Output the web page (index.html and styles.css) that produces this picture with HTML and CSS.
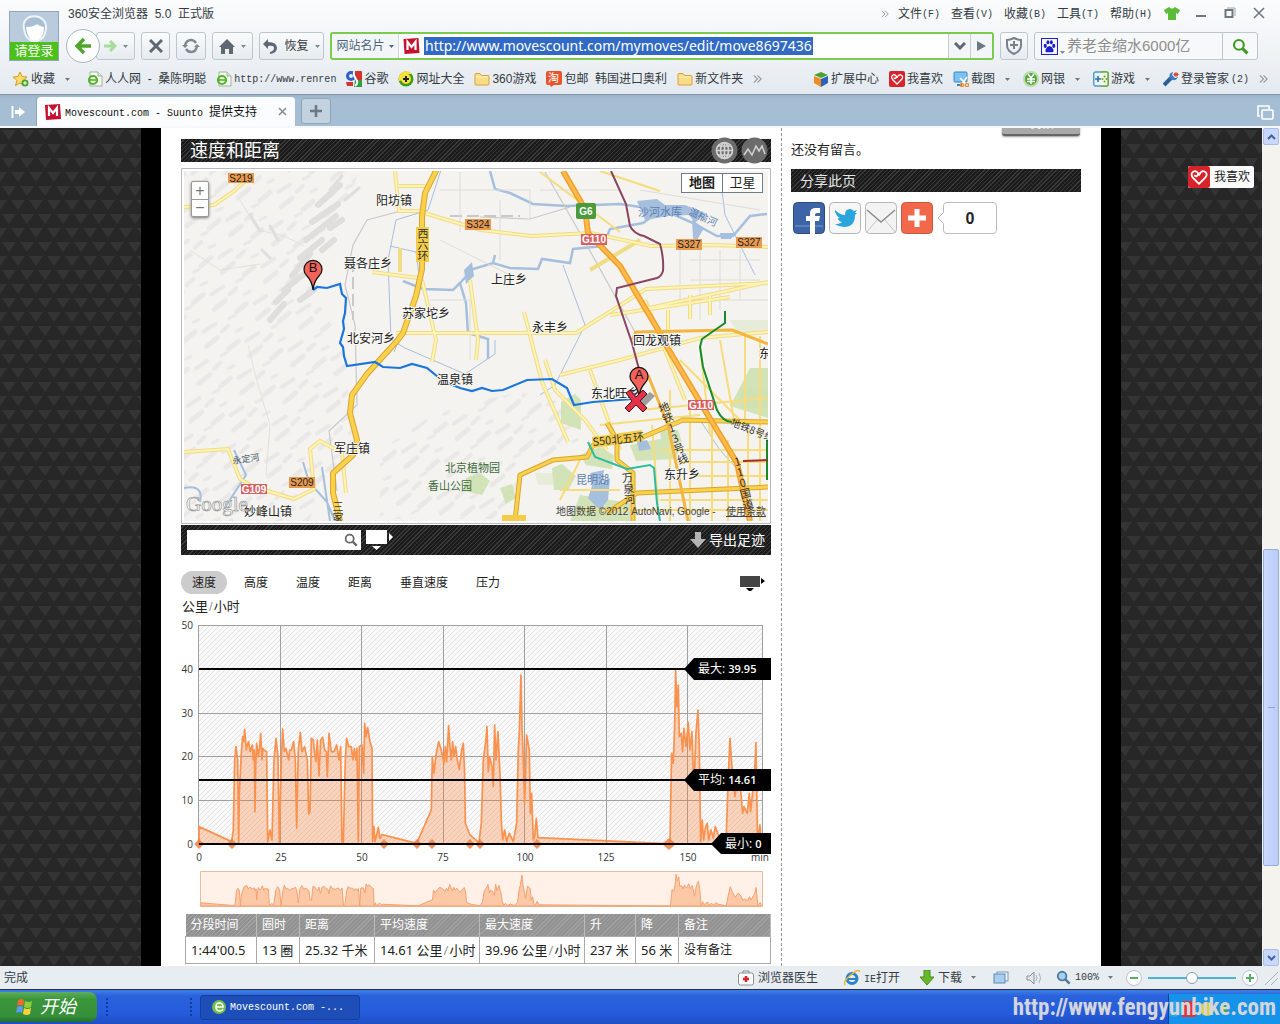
FILE: index.html
```html
<!DOCTYPE html>
<html lang="zh-CN">
<head>
<meta charset="utf-8">
<title>Movescount.com - Suunto 提供支持</title>
<link rel="stylesheet" href="styles.css">
</head>
<body>
<svg class="defs" width="0" height="0" aria-hidden="true">
  <symbol id="m" viewBox="0 0 16 16"><path d="M0 1 15 0l1 15L1 16z" fill="#c41230"/><path d="M4 12V4l4 5 4-5v8" fill="none" stroke="#fff" stroke-width="2.2"/></symbol>
  <symbol id="epage" viewBox="0 0 16 16"><path d="M3 1h8l4 4v10H3z" fill="#f6faf3" stroke="#9fb596"/><path d="M11 1v4h4" fill="#dfe9da" stroke="#9fb596"/><circle cx="6" cy="9" r="4" fill="none" stroke="#55b32a" stroke-width="2.2"/><path d="M3 9h7" stroke="#55b32a" stroke-width="1.6"/></symbol>
  <symbol id="folder" viewBox="0 0 16 16"><path d="M1 3.500q0-1 1-1h4l1.500 2H14q1 0 1 1V13q0 1-1 1H2q-1 0-1-1z" fill="#fbdc86" stroke="#d9a03c"/><path d="M2 6h12" stroke="#fff2c4"/></symbol>
  <symbol id="heart" viewBox="0 0 16 16"><rect width="16" height="16" rx="2" fill="#d8232a"/><path d="M8 13 3.500 8.500Q1.500 5.500 4 4q2-1 3.500 1.500Q6.500 8.500 5 7M8 13l4.500-4.500Q15 5.500 12 4 10 3 8 6.500" fill="none" stroke="#fff" stroke-width="1.300" stroke-linecap="round"/></symbol>
  <symbol id="lens" viewBox="0 0 16 16"><circle cx="6.500" cy="6.500" r="4.600" fill="none" stroke="currentColor" stroke-width="2"/><path d="m10 10 4.500 4.500" stroke="currentColor" stroke-width="2.800"/></symbol>
  <symbol id="caret" viewBox="0 0 7 4"><path d="M0 0h7L3.500 4z" fill="currentColor"/></symbol>
  <symbol id="more" viewBox="0 0 10 8"><path d="m1 0 4 4-4 4M5 0l4 4-4 4" fill="none" stroke="#8f979f" stroke-width="1.200"/></symbol>
</svg>

<header class="chrome">
  <button class="login"><svg viewBox="0 0 48 30" width="48" height="30"><rect width="48" height="30" fill="#b9cbdd"/><path d="M14 17C10 0 38 0 36 17q-1 10-9 12h-5q-7-3-8-12z" fill="#a9bfd3" stroke="#eef4f9" stroke-width="2"/><path d="M16 15q8 0 11-3 3 3 7 3 0 10-6 13h-6q-5-3-6-13z" fill="#fff"/></svg><span>请登录</span></button>
  <div class="rows">
    <div class="titlerow">
      <span class="apptitle">360安全浏览器&nbsp; 5.0&nbsp; 正式版</span>
      <svg class="more" width="8" height="8"><use href="#more"/></svg>
      <nav class="menus"><button>文件<i>(F)</i></button><button>查看<i>(V)</i></button><button>收藏<i>(B)</i></button><button>工具<i>(T)</i></button><button>帮助<i>(H)</i></button></nav>
      <button class="win" aria-label="皮肤"><svg width="16" height="13" viewBox="0 0 16 13"><path d="M5 0q3 3 6 0l5 3-2 4-2-1v7H4V6L2 7 0 3z" fill="#5cbc38"/></svg></button>
      <button class="win" aria-label="最小化"><svg width="12" height="12"><path d="M1 9h10" stroke="#6d7882" stroke-width="2"/></svg></button>
      <button class="win" aria-label="还原"><svg width="12" height="12"><path d="M3 1h8v8" fill="none" stroke="#9aa5ae"/><rect x="1.500" y="3" width="7" height="7" fill="none" stroke="#6d7882" stroke-width="2"/></svg></button>
      <button class="win" aria-label="关闭"><svg width="12" height="12"><path d="m1 1 10 10M11 1 1 11" stroke="#6d7882" stroke-width="1.600"/></svg></button>
    </div>
    <div class="toolrow">
      <div class="nav">
        <button class="back" aria-label="后退"><svg width="18" height="18"><path d="M10 2 3 9l7 7M4 9h13" fill="none" stroke="#4fa52a" stroke-width="3.400"/></svg></button>
        <button class="fwd" aria-label="前进"><svg width="14" height="12"><path d="m7 1 5 5-5 5M11 6H1" fill="none" stroke="#a9dc9c" stroke-width="3"/></svg><svg class="car" width="5" height="3"><use href="#caret"/></svg></button>
      </div>
      <button class="tb w29" aria-label="停止"><svg width="14" height="14"><path d="m1 1 12 12M13 1 1 13" stroke="#5d6873" stroke-width="3"/></svg></button>
      <button class="tb w30" aria-label="刷新"><svg width="18" height="16" fill="none" stroke="#7e8891" stroke-width="2.400"><path d="M3 8q1-6 6-6 3 0 5 3M15 8q-1 6-6 6-3 0-5-3"/><path d="m0 7 3 3 3-3zM12 9l3-3 3 3z" fill="#7e8891" stroke="none"/></svg></button>
      <button class="tb w41" aria-label="主页"><svg width="16" height="15"><path d="M8 0 0 8h2v7h4v-5h4v5h4V8h2z" fill="#5d6873"/></svg><svg class="car" width="5" height="3"><use href="#caret"/></svg></button>
      <button class="tb w65"><svg width="15" height="15"><path d="M5 0 0 5l5 5V7q6-1 6 2 0 3-4 4v2q7-1 7-6 0-6-9-6z" fill="#5d6873"/></svg>恢复<svg class="car" width="5" height="3"><use href="#caret"/></svg></button>
      <form class="address">
        <button type="button" class="card">网站名片<svg width="5" height="3"><use href="#caret"/></svg></button>
        <svg width="17" height="16"><use href="#m"/></svg>
        <input class="url" aria-label="地址" value="http://www.movescount.com/mymoves/edit/move8697436">
        <span class="grow"></span>
        <button type="button" class="seg" aria-label="展开"><svg width="12" height="8"><path d="m1 1 5 5 5-5" fill="none" stroke="#5d6873" stroke-width="3"/></svg></button>
        <button type="button" class="seg" aria-label="转到"><svg width="9" height="10"><path d="m0 0 9 5-9 5z" fill="#6d7882"/></svg></button>
      </form>
      <button class="tb w28" aria-label="安全"><svg width="18" height="18"><path d="M9 1q4 2 7 2v5q0 6-7 9-7-3-7-9V3q3 0 7-2z" fill="none" stroke="#76818b" stroke-width="2"/><path d="M9 4v8M5 8h8" stroke="#76818b" stroke-width="2"/></svg></button>
      <form class="search">
        <svg width="17" height="17" viewBox="0 0 16 16"><rect x=".5" y=".5" width="15" height="15" fill="#fff" stroke="#1b22c9"/><g fill="#1b22c9"><ellipse cx="4" cy="7.500" rx="1.500" ry="2"/><ellipse cx="6.500" cy="4" rx="1.400" ry="2"/><ellipse cx="9.700" cy="4" rx="1.400" ry="2"/><ellipse cx="12" cy="7.500" rx="1.500" ry="2"/><path d="M8 7.500q2 0 3.500 3 1 3-1.500 3H6q-2.500 0-1.500-3Q6 7.500 8 7.500z"/></g></svg>
        <svg class="car low" width="5" height="3"><use href="#caret"/></svg>
        <input aria-label="搜索" placeholder="养老金缩水6000亿">
        <button type="button" aria-label="搜索"><svg width="17" height="17"><use href="#lens"/></svg></button>
      </form>
    </div>
  </div>
</header>

<nav class="bookmarks">
  <a href="#" class="fav"><svg width="16" height="16"><path d="m7 1 2 4.500 5 .5-4 3.500 1.500 5L7 12l-4.500 2.500L4 9.500 0 6l5-.5z" fill="#fddc6a" stroke="#d79a22"/><circle cx="12" cy="12" r="3.500" fill="#4aa52a"/><path d="M12 10v4M10 12h4" stroke="#fff"/></svg>收藏<svg class="drop" width="5" height="3"><use href="#caret"/></svg></a>
  <a href="#"><svg width="16" height="16"><use href="#epage"/></svg>人人网&nbsp; -&nbsp; 桑陈明聪</a>
  <a href="#"><svg width="16" height="16"><use href="#epage"/></svg><i>http://www.renren</i></a>
  <a href="#"><svg width="16" height="16"><path d="M9 0h6q1 0 1 1v8H9z" fill="#d8302a"/><path d="M9 9h7v7H8z" fill="#2f9e44"/><circle cx="5" cy="5" r="3.500" fill="none" stroke="#2a62c9" stroke-width="3"/><path d="M0 11h7v4H1z" fill="#d8302a"/><path d="M8 1q-1 3 2 7 3 4-1 7" fill="none" stroke="#fff" stroke-width="2"/></svg>谷歌</a>
  <a href="#"><svg width="16" height="16"><circle cx="8" cy="8" r="7.500" fill="#3d9a1c"/><path d="M1 10A7.500 7.500 0 0 1 14 3q-7-1-9 6z" fill="#f6e13a"/><circle cx="8" cy="8" r="5" fill="#f6e13a"/><path d="M8 5v6M5 8h6" stroke="#222" stroke-width="2"/></svg>网址大全</a>
  <a href="#"><svg width="16" height="16"><use href="#folder"/></svg>360游戏</a>
  <a href="#"><svg width="16" height="16"><rect width="16" height="14" rx="2" fill="#e8552b"/><path d="m4 14 1 2 3-2" fill="#e8552b"/><text x="2" y="11" font-size="11" fill="#fff">淘</text></svg>包邮&nbsp; 韩国进口奥利</a>
  <a href="#"><svg width="16" height="16"><use href="#folder"/></svg>新文件夹</a>
  <svg width="9" height="8"><use href="#more"/></svg>
  <span class="grow"></span>
  <a href="#"><svg width="16" height="16"><path d="m8 1 7 3-7 3-7-3z" fill="#4da32f"/><path d="m1 5 7 3v8l-7-4z" fill="#f08a24"/><path d="m15 5-7 3v8l7-4z" fill="#2a62b9"/></svg>扩展中心</a>
  <a href="#"><svg width="16" height="16"><use href="#heart"/></svg>我喜欢</a>
  <a href="#"><svg width="16" height="16"><rect x="1" y="1" width="13" height="10" rx="1" fill="#7cc2ef" stroke="#3f84bd"/><path d="M4 14h5" stroke="#3f84bd" stroke-width="2"/><path d="m7 7 6 6M14 6l-5 7" stroke="#fff" stroke-width="1.500"/><circle cx="9" cy="14" r="1.600" fill="none" stroke="#f08a24" stroke-width="1.300"/><circle cx="14" cy="14" r="1.600" fill="none" stroke="#f08a24" stroke-width="1.300"/></svg>截图<svg class="drop" width="5" height="3"><use href="#caret"/></svg></a>
  <a href="#"><svg width="16" height="16"><circle cx="8" cy="8" r="7" fill="#54a63a" stroke="#b9dca9" stroke-width="2"/><path d="m5 3 3 4 3-4M8 7v6M4 8h8M4 10.500h8" fill="none" stroke="#fff" stroke-width="1.500"/></svg>网银<svg class="drop" width="5" height="3"><use href="#caret"/></svg></a>
  <a href="#"><svg width="16" height="16"><rect x=".7" y="1" width="14.500" height="14" rx="2" fill="#e9f2f7" stroke="#4c9acb" stroke-width="1.400"/><path d="M8 1h6q1 0 1 2v10q0 2-1 2H8" fill="#f2f7ea" stroke="#6fae2e" stroke-width="1.400"/><path d="M5 5v6M2 8h6" stroke="#2e71a8" stroke-width="1.600"/><g fill="#6a9c2e"><circle cx="11.500" cy="5.500" r="1"/><circle cx="11.500" cy="10.500" r="1"/><circle cx="13.500" cy="8" r="1"/><circle cx="9.500" cy="8" r="1"/></g></svg>游戏<svg class="drop" width="5" height="3"><use href="#caret"/></svg></a>
  <a href="#"><svg width="16" height="16"><path d="m1 14 7-7" stroke="#2d5f9e" stroke-width="4"/><path d="M7 8Q5 2 10 1L9 4l3 3 3-1q-2 5-8 2z" fill="#3f7dc2"/><path d="M13 1v5M10.500 3.500h5M11 2l4 3M15 2l-4 3" stroke="#d63a2f"/></svg>登录管家<i>(2)</i></a>
  <svg width="9" height="8"><use href="#more"/></svg>
</nav>

<div class="tabs">
  <button class="side" aria-label="侧栏"><svg width="15" height="14"><path d="M1.500 1v12" stroke="#fff" stroke-width="2"/><path d="M4 5h4V2l6 5-6 5V9H4z" fill="#fff"/></svg></button>
  <div class="tab"><svg width="16" height="16"><use href="#m"/></svg><span><i>Movescount.com&nbsp;-&nbsp;Suunto&nbsp;</i>提供支持</span><button aria-label="关闭标签"><svg width="9" height="9"><path d="m1 1 7 7M8 1 1 8" stroke="#84909b" stroke-width="1.600"/></svg></button></div>
  <button class="newtab" aria-label="新标签"><svg width="14" height="14"><path d="M7 1v12M1 7h12" stroke="#6d7882" stroke-width="2.600"/></svg></button>
  <span class="grow"></span>
  <svg class="stack" width="17" height="16" fill="none" stroke="#fff" stroke-width="1.600"><path d="M3 11H1V1h11v3"/><rect x="5" y="5" width="11" height="9" rx="1"/></svg>
</div>

<div class="viewport">
  <div class="scroller">
    <main class="page">
      <section class="left">
        <h1 class="bar big"><span>速度和距离</span>
          <svg width="27" height="27" viewBox="0 0 27 27"><circle cx="13.500" cy="13.500" r="13" fill="#6b6b6b"/><g fill="none" stroke="#d3d3d3" stroke-width="1.700"><circle cx="13.500" cy="13.500" r="8"/><ellipse cx="13.500" cy="13.500" rx="4" ry="8"/><path d="M13.500 5v17M5 13.500h17M7 9h13M7 18h13"/></g></svg>
          <svg width="27" height="27" viewBox="0 0 27 27"><circle cx="13.500" cy="13.500" r="13" fill="#6b6b6b"/><path d="m3 18 4-6 4 6 4-9 3 5 3-5 3 8" fill="none" stroke="#d3d3d3" stroke-width="1.500"/></svg>
        </h1>
        <div class="map">
          <svg viewBox="181 168 590 356" class="fluid" font-size="12">
            <defs>
              <clipPath id="mc"><path d="M184 171h584v350H184z"/></clipPath>
              <pattern id="hill" width="44" height="38" patternUnits="userSpaceOnUse" patternTransform="rotate(12)"><g fill="none" stroke="#e9e8e6" stroke-linecap="round"><path d="M4 16 14 6M22 12l5-7" stroke-width="4"/><path d="m10 30 9-11M32 28l8-10" stroke-width="5"/><path d="m26 36 5-4M36 9l5-4" stroke-width="3"/></g></pattern>
            </defs>
            <path d="M181.500 168.500h589v355h-589z" fill="#fff" stroke="#b5b8c0"/>
            <g clip-path="url(#mc)">
              <path d="M184 171h584v350H184z" fill="#f4f3f0"/>
              <path d="M184 171h175l-15 45-40 30 10 50 30 50 5 60 5 40-25 30-20 45H184zM380 450l60-40 80-18 40 10 20 40-60 25-10 52H380z" fill="url(#hill)"/>
              <g fill="none" stroke="#dfdedc" stroke-linecap="round"><path d="m318 205 22-20M312 222l26-18M306 240l30-24M300 258l22-18M292 276l18-22M284 290l20-16M276 302l12-12M300 300l14-10M270 320l14-16M322 250l12-10M330 228l12-8" stroke-width="6"/><path d="m270 226 8 14M250 215l10 16M262 250l8 8M330 190l12-14M345 200l14-12" stroke-width="3"/></g>
              <g fill="#cadfaa"><path d="m561 402 14-8 6 6v30l-20-7zM750 368h18v50l-38-12zM580 455l20-8 14 8-2 14-26-4zM630 445l30-6 20 8-4 12-40 2zM552 468l10-4 14 12-8 14h-14zM466 478l14-5 10 8-8 14-18-4zM580 495l50 8v18h-60zM500 488l12-4 4 14-10 6zM660 430h18l4 12-20 4z" opacity=".8"/><path d="M535 473h18v12h-15zM730 320h38v14h-30zM740 388h28v20h-28z" opacity=".35"/></g>
              <g fill="#a5bfdd"><path d="m590 473 14-3-2 14 8-6-2 22-8 10-12-12 4-12zM637 201l20-2 8 6h20l20 8-10 10-6-8-20 1-24 4zM692 220l12 8-8 14-3-4zM720 233h14l-3 6h-10zM637 442l10-2 4 9-12 2zM464 270l8-8 2 14-8 8z"/></g>
              <g fill="none" stroke="#a5bfdd" stroke-width="2.500"><path d="m490 171 5 18 15 4 23 11 34 2 53-2 20 3M668 212l25 11 24 13h16l17-20 17-2M650 218l-7 5-33 6-7 17-30 3-3 14-28-4-4 10-28-1-17-5-20 6-13 14-7 7-30-1-20-8M493 263l2-8M460 283l6 20 2 30 20 6v20"/><path d="M184 488q20-4 16 14M234 450l12 25-22 34M303 462l6 20 18 20 8 19M322 467l8 54" stroke-width="2"/><path d="M441 170 428 210 396 220l-8 40 3 80 14 8 60 26 30-20v-14M563 265l22 60-30 60-15 10M700 420l20 30 18 20M390 246l26 6 4 30-18 50-8 20M720 175l5 40 30 60" stroke-width="1"/></g>
              <g fill="none" stroke="#c9c9c9"><path d="m397 212-30 8-14 25-8 40 10 40 2 80-28 26 8 60M480 217l50 2 40-12M545 172l40 70 50 90" stroke-width="1.200"/><path d="M240 200l18 30 26 6 20 10M248 345l10 40 12 40-4 50M190 250l30 20 40-6" stroke="#e2e1da" stroke-width="1"/><path d="M450 216h70M353 260v60" stroke-dasharray="12 5" stroke-width="2"/></g>
              <g fill="none" stroke="#dddcd8" stroke-width="1"><path d="M440 190h90v30M460 172v60M500 200v60M540 190h80M640 190l120 20M680 240v60M700 240v80M720 250v60M740 250v50M690 260h70M690 280h70M690 300h78M440 240l80 40M430 300h40v60"/></g>
              <g fill="none" stroke="#f0dc86" stroke-width="4"><path d="M184 207l30-2 20-14 18-16M395 171l4 40h22M399 186h26M421 212l60 18 50 6 60-3 60 13 60-1 57 2M372 272l46 6M396 333h180l70-44 122-6M470 280l8 60-2 20M524 312l18 70 26 60M640 240l-50 30M184 452l44-3 12 30 14 8 40 12 20-10-4-40 10-8 22 12 4 40M560 375l60-15 80-22 68-6M545 360l10 30 30 30 22 30M422 280l14 60-4 22M400 248v24M590 370l18 50 12 30M640 310l128-28M645 300l40 100M610 315l120-18M668 310v24M690 295v24M710 295v20"/></g>
              <g fill="none" stroke="#fdf3b4" stroke-width="2"><path d="M184 207l30-2 20-14 18-16M395 171l4 40h22M399 186h26M421 212l60 18 50 6 60-3 60 13 60-1 57 2M372 272l46 6M396 333h180l70-44 122-6M470 280l8 60-2 20M524 312l18 70 26 60M184 452l44-3 12 30 14 8 40 12 20-10-4-40 10-8 22 12 4 40M560 375l60-15 80-22 68-6M545 360l10 30 30 30 22 30M422 280l14 60-4 22M590 370l18 50 12 30M640 310l128-28M645 300l40 100M610 315l120-18M668 310v24M690 295v24M710 295v20"/></g>
              <g fill="none" stroke="#f6dc7c" stroke-width="2"><path d="M640 410l128-12M600 425l100-10M660 450h108M680 462h88M690 476h78M660 500h108M580 510h188M670 390v131M690 400v121M712 425v96M728 440v81M748 430v91M652 425l6 80M560 500l20-40M680 360l60 60M700 345l10 90M720 340l14 80M745 336v90M760 336v185M540 172l80 60M600 171l60 20M560 490h60"/></g>
              <g fill="none" stroke-linejoin="round"><g stroke="#d9a531" stroke-width="6"><path d="m437 169-12 24-3 23v53l-6 27-13 37-6 8-30 33-15 21-2 18 7 27-4 15-20 18v20l7 28"/><path d="m515 521 5-46 33-15 34-3 6-12 50-8 40-17 85 2M607 423l10 17v20l16 13v48M607 513l30-20 131-6" stroke-width="5"/></g><g stroke="#fad14b" stroke-width="4"><path d="m437 169-12 24-3 23v53l-6 27-13 37-6 8-30 33-15 21-2 18 7 27-4 15-20 18v20l7 28"/><path d="m515 521 5-46 33-15 34-3 6-12 50-8 40-17 85 2M607 423l10 17v20l16 13v48M607 513l30-20 131-6" stroke-width="3"/></g>
              <path d="m563 171 22 38 3 24 32 33 40 67 7 14 36 60 34 56 13 58" stroke="#f0a12a" stroke-width="6"/><path d="m563 171 22 38 3 24 32 33 40 67 7 14 36 60 34 56 13 58" stroke="#ffb94a" stroke-width="3"/>
              <path d="m632 340 4-8 96-2 36 14M648 375l20 50 20 96" stroke="#f2b540" stroke-width="3"/></g>
              <path d="m611 171 15 33 4 22q4 8 14 10l16 8q4 14 3 27-2 6-6 7l-40 10-1 8 16 47 8 30" fill="none" stroke="#8a4460" stroke-width="2"/>
              <path d="M725 311v12l-23 16-2 8 3 20 14 43q6 12 15 12M767 440v40" fill="none" stroke="#178a2b" stroke-width="2"/>
              <path d="m588 442 7 15 32 12 23-4 4 3 3 35 3 18" fill="none" stroke="#2bbda0" stroke-width="2"/>
              <path d="M743 461l25-1" stroke="#9c2f2f" stroke-width="2"/>
              <path d="m313 290 4-3 10 1 13-4 2 10 4 4-1 15-2 8 1 8-4 14 3 4 1 9 3 10 28-4 8 5 17 1 12-4 15 4 16 13 17 7 12 3 10-3 10 3 11-1 24-10 25-1 15 9 7 17 19-3 40-3" fill="none" stroke="#1a76dc" stroke-width="2.200"/>
              <g fill="#e99a4e"><path d="M228 173h26v10h-26zM465 219h26v11h-26zM676 239h26v11h-26zM736 237h26v11h-26zM289 477h26v11h-26z"/></g><g fill="#d85f62"><path d="M581 234h26v11h-26zM688 400h26v10h-26zM241 484h26v10h-26z"/></g><rect x="576" y="203" width="20" height="16" rx="2" fill="#4b9b3c"/>
              <path d="M416 227h13v35h-13zM502 515h24v6h-24zM592 437l50-7 1 11-50 7z" fill="#f3cc48"/>
              <g font-size="10" text-anchor="middle" fill="#222" class="sans"><text x="241" y="182">S219</text><text x="478" y="228">S324</text><text x="689" y="248">S327</text><text x="749" y="246">S327</text><text x="302" y="486">S209</text></g>
              <g font-size="10" text-anchor="middle" fill="#fff" class="sans b"><text x="586" y="215">G6</text><text x="594" y="243">G110</text><text x="701" y="409">G110</text><text x="254" y="493">G109</text></g>
              <g fill="#222" class="halo"><text x="376" y="205">阳坊镇</text><text x="344" y="268">聂各庄乡</text><text x="402" y="318">苏家坨乡</text><text x="347" y="343">北安河乡</text><text x="491" y="284">上庄乡</text><text x="532" y="332">永丰乡</text><text x="633" y="345">回龙观镇</text><text x="437" y="384">温泉镇</text><text x="334" y="453">军庄镇</text><text x="244" y="516">妙峰山镇</text><text x="591" y="398">东北旺乡</text><text x="664" y="479">东升乡</text><text x="759" y="358">东</text></g>
              <g fill="#333" font-size="11"><text x="593" y="446" transform="rotate(-6 593 446)">S50北五环</text><text x="730" y="425" transform="rotate(22 730 425)" font-size="10">地铁8号线</text><g class="vert"><text x="423" y="228">西六环</text><text x="662" y="402" transform="rotate(-20 662 402)">地铁13号线</text><text x="627" y="472" transform="rotate(-6 627 472)">万泉河</text><text x="736" y="456" transform="rotate(-14 736 456)">110国道</text><text x="338" y="501">三家</text></g></g>
              <g fill="#3c6b3a" font-size="11"><text x="445" y="472">北京植物园</text><text x="428" y="490">香山公园</text></g>
              <g fill="#5b7fb0" font-size="11"><text x="576" y="484">昆明湖</text><text x="638" y="216">沙河水库</text><text x="688" y="214" transform="rotate(25 688 214)" font-size="10">温榆河</text></g><text x="233" y="464" transform="rotate(-8 233 464)" font-size="9" fill="#456">永定河</text>
              <text x="186" y="511" font-size="21" class="serif" fill="#fff" stroke="#999" stroke-width=".7">Google</text>
              <g font-size="10" fill="#444" class="sans"><text x="556" y="515">地图数据 ©2012 AutoNavi, Google -</text><text x="726" y="515" text-decoration="underline">使用条款</text></g>
            </g>
            <path d="m638 402 12-10 5 4-12 12z" fill="#000" opacity=".35"/>
            <g stroke="#111" stroke-width="1.200" fill="#f0625a"><path d="M313 290q-1-9-6-14a9 9 0 1 1 12 0q-5 5-6 14zM639 397q-1-9-6-14a9 9 0 1 1 12 0q-5 5-6 14z"/></g>
            <path d="m626 393 4-3 6 7 7-7 4 4-7 7 7 7-4 4-7-7-7 7-4-4 7-7z" fill="#e2324a" stroke="#4a1018"/>
            <g font-size="13" text-anchor="middle" class="sans" fill="#111"><text x="313" y="272">B</text><text x="639" y="379">A</text></g>
          </svg>
          <div class="zoom"><button>+</button><button>−</button></div>
          <div class="types"><button class="on">地图</button><button>卫星</button></div>
        </div>
        <div class="bar tools">
          <label class="find"><input aria-label="搜索地图"><svg width="14" height="14"><use href="#lens"/></svg></label>
          <svg width="29" height="22" fill="#fff"><path d="M1 1h21v14H1zM24 4l4 4-4 4zM7 17h9l-4.500 4z"/></svg>
          <span class="grow"></span>
          <a href="#"><svg width="16" height="16"><path d="M5 0h6v7h5l-8 9-8-9h5z" fill="#b5b5b5"/></svg>导出足迹</a>
        </div>
        <div class="pills"><button class="on">速度</button><button>高度</button><button>温度</button><button>距离</button><button>垂直速度</button><button>压力</button><span class="grow"></span><svg width="26" height="16"><path d="M0 1h20v11H0z" fill="#444"/><path d="m21 3 4 3-4 3zM6 13h8l-4 4z" fill="#000"/></svg></div>
        <p class="unit">公里<s>/</s>小时</p>
        <svg viewBox="181 618 590 250" class="fluid chart" font-size="10">
          <defs>
            <pattern id="hatch" width="5" height="5" patternUnits="userSpaceOnUse"><path d="M-1 6 6-1M-1 1l2-2M4 6l2-2" stroke="#e3e3e3"/></pattern>
            <path id="speed" vector-effect="non-scaling-stroke" d="M87 852V800L185 845 190 810 194 600 198 560 203 600 206 848 208 700 211 640 214 580 218 530 221 545 224 508 229 570 232 555 236 545 240 575 242 570 247 555 250 600 253 570 255 755 257 620 260 550 265 590 269 560 272 520 276 600 279 565 282 570 290 575 293 845 300 810 306 840 312 600 318 535 324 590 328 850 334 600 338 507 343 575 348 565 356 600 359 570 364 570 371 545 376 600 380 805 385 570 391 517 396 575 404 560 412 600 416 762 420 755 424 535 430 540 434 580 438 605 442 540 447 648 452 540 458 532 464 570 469 575 472 650 475 570 477 520 484 575 492 575 500 555 507 600 512 560 516 848 520 848 526 600 530 535 536 560 544 560 549 600 553 565 558 600 561 565 565 845 568 560 576 555 581 640 584 490 588 530 593 503 600 545 606 565 608 845 612 800 615 845 620 825 625 802 630 835 636 824 740 850 784 750 787 590 792 640 798 585 806 545 814 570 822 610 826 560 830 605 836 497 840 560 844 600 848 545 852 590 857 560 862 600 868 628 875 570 880 550 884 640 886 790 900 825 927 848 934 790 940 600 948 540 951 500 955 635 959 590 966 620 970 680 974 495 978 600 984 515 988 600 990 640 994 780 998 840 1004 810 1010 845 1018 820 1030 845 1040 790 1045 570 1048 520 1053 345 1056 500 1060 600 1064 730 1070 525 1078 570 1081 760 1085 700 1090 840 1094 830 1099 775 1104 833 1500 852 1505 580 1510 610 1514 500 1517 332 1521 440 1525 375 1528 530 1534 520 1538 575 1542 505 1548 560 1555 487 1560 570 1566 515 1572 690 1578 520 1584 450 1588 560 1592 845 1597 780 1601 840 1607 800 1612 790 1616 840 1623 810 1630 835 1636 800 1645 825 1668 850 1674 680 1680 535 1686 620 1695 710 1704 640 1712 690 1718 760 1722 740 1732 760 1738 700 1742 755 1750 680 1754 640 1758 548 1763 850 1770 795 1774 850V852z"/>
          </defs>
          <path d="M199 625h564v219H199z" fill="#f9f9f9"/>
          <path d="M199 625h564v219H199z" fill="url(#hatch)"/>
          <path d="M198.500 625V844M280.500 625V844M361.500 625V844M443.500 625V844M524.500 625V844M606.500 625V844M687.500 625V844M762.500 625V844M199 625.500h564M199 713.500h564M199 756.500h564M199 800.500h564" stroke="#a0a0a0"/>
          <use href="#speed" transform="matrix(.3333 0 0 .3333 170 560)" fill="#f97b2c" fill-opacity=".3" stroke="#f9924e" stroke-width="1.700" stroke-linejoin="round"/>
          <path d="m199 839 5 5-5 5-5-5zM232 839l5 5-5 5-5-5zM384 839l5 5-5 5-5-5zM417 839l5 5-5 5-5-5zM432 839l5 5-5 5-5-5zM470 839l5 5-5 5-5-5zM480 839l5 5-5 5-5-5zM537 839l5 5-5 5-5-5zM669 838l7 6-7 6-7-6z" fill="#f07a35" opacity=".8"/>
          <path d="M199 669h490M199 780h490M199 844h520" stroke="#000" stroke-width="2"/>
          <g fill="#333" class="num"><g text-anchor="end"><text x="193" y="629">50</text><text x="193" y="673">40</text><text x="193" y="717">30</text><text x="193" y="760">20</text><text x="193" y="804">10</text><text x="193" y="848">0</text></g><g text-anchor="middle"><text x="199" y="861">0</text><text x="281" y="861">25</text><text x="362" y="861">50</text><text x="443" y="861">75</text><text x="525" y="861">100</text><text x="606" y="861">125</text><text x="688" y="861">150</text><text x="760" y="861">min</text></g></g>
          <path d="M684 669l10-11h77v22h-77zM684 780l10-11h77v22h-77zM711 844l10-11h50v21h-50z"/>
          <g fill="#fff" class="num" font-size="12"><text x="698" y="673">最大: <tspan font-size="11" font-weight="600">39.95</tspan></text><text x="698" y="784">平均: <tspan font-size="11" font-weight="600">14.61</tspan></text><text x="725" y="848">最小: <tspan font-size="11" font-weight="600">0</tspan></text></g>
        </svg>
        <svg viewBox="181 868 590 42" class="fluid mini">
          <path d="M200.500 871.500h562v35h-562z" fill="#fff1e8" stroke="#e6bda2"/>
          <use href="#speed" transform="matrix(.3323 0 0 .061 172 854)" fill="#fbb78a" fill-opacity=".7" stroke="#f3a273" stroke-width="1"/>
        </svg>
        <table class="laps">
          <thead><tr><th class="c1">分段时间</th><th class="c2">圈时</th><th class="c3">距离</th><th class="c4">平均速度</th><th class="c4">最大速度</th><th class="c5">升</th><th class="c2">降</th><th>备注</th></tr></thead>
          <tbody><tr><td>1:44'00.5</td><td>13 圈</td><td>25.32 千米</td><td>14.61 公里<s>/</s>小时</td><td>39.96 公里<s>/</s>小时</td><td>237 米</td><td>56 米</td><td class="note">没有备注</td></tr></tbody>
        </table>
      </section>
      <aside class="right">
        <button class="post">发帖</button>
        <p>还没有留言。</p>
        <h2 class="bar">分享此页</h2>
        <div class="share">
          <a href="#" aria-label="Facebook"><svg width="32" height="32"><rect x=".5" y=".5" width="31" height="31" rx="4" fill="#3d64a6" stroke="#2a4a80"/><path d="M2 24h28" stroke="#7d9cce"/><path d="M17 32V19h-4v-5h4v-3q0-5 6-5h4v5h-3q-2 0-2 2v1h5l-1 5h-4v13z" fill="#fff"/></svg></a>
          <a href="#" aria-label="Twitter"><svg width="32" height="32"><rect x=".5" y=".5" width="31" height="31" rx="4" fill="#f6f6f6" stroke="#b5b5b5"/><path d="M6 8q5 5 10 5 0-6 5-6 2 0 4 2l3-1-2 3 2 0-2 2q0 12-11 12-5 0-9-3 5 0 7-2-4-1-4-4h2q-4-2-4-5l2 1Q5 11 6 8z" fill="#2aa5de"/></svg></a>
          <a href="#" aria-label="邮件"><svg width="32" height="32"><rect x=".5" y=".5" width="31" height="31" rx="4" fill="#f3f3f3" stroke="#b5b5b5"/><path d="m1 31 11-13M31 31 20 18" stroke="#c5c5c5"/><path d="m2 8 14 12L30 8" fill="none" stroke="#8a8a8a" stroke-width="1.400"/></svg></a>
          <a href="#" aria-label="更多"><svg width="32" height="32"><rect x=".5" y=".5" width="31" height="31" rx="4" fill="#f2684a" stroke="#c9573d"/><path d="M16 7v18M7 16h18" stroke="#fff" stroke-width="5"/></svg></a>
          <svg width="60" height="32" class="sans b"><path d="M10 .5h46q3.500 0 3.500 3v25q0 3-3.500 3H10q-3.500 0-3.500-3v-7L1 16l5.500-5.500v-7q0-3 3.500-3z" fill="#fff" stroke="#bbb"/><text x="33" y="22" font-size="16" text-anchor="middle" fill="#222">0</text></svg>
        </div>
      </aside>
    </main>
    <button class="like"><svg width="22" height="22" viewBox="0 0 16 16"><use href="#heart"/></svg><span>我喜欢</span></button>
  </div>
  <div class="scrollbar">
    <button aria-label="向上"><svg width="9" height="6"><path d="m1 5 3.500-3.500L8 5" fill="none" stroke="#41629f" stroke-width="2"/></svg></button>
    <span class="above"></span><span class="thumb"></span><span class="below"></span>
    <button aria-label="向下"><svg width="9" height="6"><path d="m1 1 3.500 3.500L8 1" fill="none" stroke="#41629f" stroke-width="2"/></svg></button>
  </div>
</div>

<footer class="status">
  <span>完成</span><span class="grow"></span>
  <button class="s1"><svg width="16" height="16"><rect x=".5" y="3" width="15" height="12" rx="2" fill="#fff" stroke="#8b8f94"/><path d="M5 3V1h6v2" fill="none" stroke="#8b8f94"/><path d="M8 6v6M5 9h6" stroke="#d8232a" stroke-width="2.500"/></svg>浏览器医生</button>
  <button class="s2"><svg width="16" height="16"><circle cx="8" cy="8.500" r="5" fill="none" stroke="#2b83cc" stroke-width="3"/><path d="M4 9h9" stroke="#2b83cc" stroke-width="2"/><path d="M1 15Q-1 11 8 4t7-2" fill="none" stroke="#e9b52e" stroke-width="1.500"/></svg><span><i>IE</i>打开</span></button>
  <button class="s3"><svg width="14" height="15"><path d="M4 0h6v7h4l-7 8-7-8h4z" fill="#6ab62c" stroke="#478f16"/></svg>下载<svg class="drop" width="5" height="3"><use href="#caret"/></svg></button>
  <svg width="16" height="14"><rect x="4" y="1" width="11" height="9" fill="#eef4fa" stroke="#7d97b3"/><rect x="1" y="3" width="11" height="9" fill="#a9cdee" stroke="#5f88b5"/></svg>
  <svg class="spk" width="16" height="14"><path d="M1 5h3l4-4v12L4 9H1z" fill="#e4e7ea" stroke="#87919c"/><path d="M10 4q2 3 0 6M13 2q3 5 0 10" fill="none" stroke="#9fb4c8"/></svg>
  <button class="s4"><svg width="15" height="15" viewBox="0 0 16 16" color="#56789c"><circle cx="6.500" cy="6.500" r="5" fill="#9fd3f2"/><use href="#lens"/></svg><i>100%</i><svg class="drop" width="5" height="3"><use href="#caret"/></svg></button>
  <svg width="16" height="16"><circle cx="8" cy="8" r="7.500" fill="#fff" stroke="#b5c3ce"/><path d="M4 8h8" stroke="#55b06a" stroke-width="2"/></svg>
  <input type="range" aria-label="缩放">
  <svg width="16" height="16"><circle cx="8" cy="8" r="7.500" fill="#fff" stroke="#b5c3ce"/><path d="M4 8h8M8 4v8" stroke="#55b06a" stroke-width="2"/></svg>
  <svg width="14" height="14"><path d="M1 14 14 1M7 14l7-7" stroke="#a9b2ba"/></svg>
</footer>

<div class="taskbar">
  <button class="start"><svg width="20" height="18"><path d="M3 2q4-2 6 0L8 8Q5 6 2 8z" fill="#ee6a2f"/><path d="M10 3q4 2 7 0l-1 6q-3 2-7 0z" fill="#8fce3a"/><path d="M2 9q3-2 6 0l-1 6q-3-2-6 0z" fill="#5c9cf0"/><path d="M9 10q3 2 7 0l-1 6q-3 2-7 0z" fill="#f8d23a"/></svg>开始</button>
  <span class="grip"></span><span class="grip far"></span>
  <button class="task"><svg width="14" height="14"><circle cx="7" cy="7" r="7" fill="#6fc04a"/><path d="M4 7h7q0-4-4-4-3 0-3 4t4 4q2 0 3-2" fill="none" stroke="#fff" stroke-width="1.600"/></svg><i>Movescount.com -...</i></button>
  <span class="grow"></span>
  <div class="tray"><svg width="70" height="20"><circle cx="5" cy="10" r="8" fill="#2aa3ee"/><rect x="13" y="2" width="14" height="16" fill="#e2323a"/><circle cx="38" cy="10" r="7" fill="#d9d03c"/><circle cx="54" cy="10" r="4" fill="#4fa82c"/></svg></div>
  <span class="mark">http://www.fengyunbike.com</span>
</div>
</body>
</html>
```
FILE: styles.css
```css
* { box-sizing: border-box; }
body { margin: 0; min-height: 100vh; display: flex; flex-direction: column; font: 12px/16px "Liberation Sans", "Noto Sans CJK SC", sans-serif; color: #333b43; background: #e8edf2; }
button, input { font: inherit; color: inherit; }
button { border: 0; background: none; padding: 0; display: inline-flex; align-items: center; justify-content: center; white-space: nowrap; }
a { color: inherit; text-decoration: none; }
i { font: 10px "Liberation Mono", monospace; }
s { text-decoration: none; color: #999; margin: 0 1px; }
svg { flex: none; }
h1, h2, p { margin: 0; font-weight: normal; }
.defs { position: absolute; }
.grow { flex: 1; }
.sans { font-family: "Liberation Sans", "Noto Sans CJK SC", sans-serif; }
.serif { font-family: "Liberation Serif", serif; }
.b { font-weight: bold; }
.num { font-family: "Open Sans", "Noto Sans CJK SC", sans-serif; }
.car { color: #7e8891; }

.chrome { display: flex; gap: 7px; padding: 0 8px 0 9px; height: 62px; background: linear-gradient(#fbfcfd, #edf1f5); }
.login { flex: none; flex-direction: column; width: 50px; height: 50px; margin-top: 11px; border: 1px solid #8fa6bb; background: #4cc11c; color: #fff; font-size: 13px; }
.login span { line-height: 18px; }
.rows { flex: 1; min-width: 0; }
.titlerow { display: flex; align-items: center; height: 28px; padding-left: 2px; }
.apptitle { flex: 1; }
.more { margin-right: 5px; }
.menus { display: flex; margin: 0 -6px 0 4px; }
.menus button { width: 53px; justify-content: flex-start; }
.win { width: 29px; margin-bottom: 2px; }
.win:last-child { margin-right: -1px; }
.toolrow { display: flex; gap: 6px; padding: 4px 14px 0 0; }
.nav { display: flex; height: 28px; }
.back { width: 34px; height: 34px; margin: -3px -4px 0 0; border: 1px solid #aab5bf; border-radius: 17px; background: #fbfcfc; position: relative; }
.fwd { width: 39px; gap: 6px; border: 1px solid #bcc6cf; border-radius: 3px; background: linear-gradient(#fafbfc, #e6ebf0); }
.tb { height: 28px; gap: 6px; border: 1px solid #bcc6cf; border-radius: 3px; background: linear-gradient(#fafbfc, #e6ebf0); }
.w28 { width: 28px; } .w29 { width: 29px; } .w30 { width: 30px; } .w41 { width: 41px; } .w65 { width: 65px; }
.address { flex: 1; display: flex; align-items: center; gap: 4px; min-width: 0; height: 28px; border: 2px solid #7ccb4c; border-radius: 3px; background: #fff; }
.card { gap: 4px; width: 67px; height: 24px; background: #f3f6f9; color: #4d6579; border-right: 1px solid #cfd8df; }
.url { field-sizing: content; min-width: 0; height: 18px; padding: 0 1px; border: 0; background: #316ac5; color: #fff; font: 14px/18px "Noto Sans", sans-serif; }
.seg { width: 22px; height: 24px; margin-left: -4px; border-left: 1px solid #c5ced6; background: #f3f6f9; }
.search { display: flex; align-items: center; width: 224px; height: 28px; border: 1px solid #bcc6cf; border-radius: 3px; padding-left: 6px; background: #f6f8fa; }
.search .low { align-self: flex-end; margin: 0 2px 5px; }
.search input { flex: 1; min-width: 0; border: 0; padding: 0; background: none; font-size: 15px; }
.search input::placeholder { color: #8f8f8f; }
.search button { width: 35px; height: 26px; border-left: 1px solid #bcc6cf; color: #3c9b22; }

.bookmarks { display: flex; align-items: center; gap: 10px; height: 32px; padding: 2px 12px 0 13px; background: linear-gradient(#edf1f5, #e3e9ef); white-space: nowrap; overflow: hidden; }
.bookmarks a { display: flex; align-items: center; gap: 2px; }
.bookmarks .fav { padding-right: 4px; }
.drop { margin: 0 3px 0 8px; color: #6d7882; }

.tabs { display: flex; align-items: flex-end; height: 34px; border-top: 1px solid #8296a8; border-bottom: 2px solid #f4f8fb; background: linear-gradient(#9ab3c8, #a5bed3 4px); }
.side { width: 37px; height: 29px; border-right: 1px solid #8ea6bb; }
.tab { display: flex; align-items: center; gap: 4px; width: 258px; height: 29px; padding: 0 8px 0 8px; border-radius: 4px 4px 0 0; background: #fbfcfd; color: #111; }
.tab span { flex: 1; white-space: nowrap; }
.newtab { width: 30px; height: 26px; margin: 0 0 2px 6px; border: 1px solid #8fa6ba; border-radius: 3px; background: #c3d2df; }
.stack { margin: 0 6px 5px 0; }

.viewport { flex: 1; display: flex; }
.scroller { flex: 1; position: relative; min-width: 0; overflow: hidden; background: #272727 url("data:image/svg+xml,%3Csvg xmlns='http://www.w3.org/2000/svg' width='18' height='28'%3E%3Cpath d='M2 2h14L9 12zM-7 16H7L0 26zM11 16h14l-7 10z' fill='%23343434'/%3E%3C/svg%3E"); }
.page { display: grid; grid-template-columns: 621fr 319fr; max-width: 980px; min-height: 100%; margin: 0 auto; background: #fff; border: solid #000; border-width: 0 20px; color: #222; }
.left { min-width: 0; padding: 11px 10px 0 20px; border-right: 1px dashed #999; }
.bar { display: flex; align-items: center; height: 23px; padding: 0 9px; color: #e5e5e5; font-size: 14px; background: repeating-linear-gradient(135deg, #1b1b1b 0 2px, #3a3a3a 2px 3px); }
.big { font-size: 18px; color: #fff; gap: 3px; padding-right: 3px; }
.big span { flex: 1; }
.fluid { display: block; width: 100%; height: auto; font-family: "Noto Sans CJK SC", sans-serif; }
.map { position: relative; margin-top: 6px; }
.halo text { paint-order: stroke; stroke: #f8f7f4; stroke-width: 2px; }
.vert text { writing-mode: vertical-rl; text-orientation: upright; }
.zoom { position: absolute; left: 10px; top: 13px; width: 18px; border-radius: 2px; border: 1px solid #999; background: #fff; box-shadow: 0 1px 3px #777; }
.zoom button { display: block; width: 16px; height: 17px; line-height: 14px; font-size: 16px; color: #777; }
.zoom button + button { border-top: 1px solid #999; }
.types { position: absolute; right: 8px; top: 5px; display: flex; border: 1px solid #717b87; background: #fff; }
.types button { width: 39px; height: 18px; font-size: 13px; color: #222; }
.types .on { width: 41px; font-weight: bold; border-right: 1px solid #717b87; }
.tools { height: 30px; margin-top: 1px; padding: 0 6px; gap: 4px; color: #fff; }
.tools a { display: flex; align-items: center; gap: 3px; }
.find { display: flex; align-items: center; width: 174px; height: 20px; padding-right: 3px; background: #fff; color: #666; }
.find input { flex: 1; min-width: 0; border: 0; background: none; outline: 0; }
.pills { display: flex; align-items: center; margin-top: 16px; padding-right: 5px; }
.pills button { height: 23px; padding: 0 11px; margin-right: 6px; border-radius: 12px; }
.pills .on { background: #ccc; }
.unit { margin-top: 4px; font-size: 13px; line-height: 18px; padding-left: 1px; }
.chart { margin-top: 2px; }
.laps { width: calc(100% - 4px); margin: 4px 0 0 4px; table-layout: fixed; border-collapse: collapse; white-space: nowrap; font-family: "Noto Sans", "Noto Sans CJK SC", sans-serif; }
.laps th { height: 22px; padding: 0 5px; text-align: left; font-weight: normal; font-size: 12px; color: #fff; border-right: 1px solid #bbb; background: repeating-linear-gradient(135deg, #919191 0 2px, #a3a3a3 2px 3px); line-height: 16px; }
.laps td { height: 27px; padding: 0 0 0 5px; border: 1px solid #aaa; font-size: 13px; line-height: 16px; }
.laps .note { font-size: 12px; }
.c1 { width: 71px; } .c2 { width: 43px; } .c3 { width: 75px; } .c4 { width: 105px; } .c5 { width: 51px; }
.right { padding: 0 20px 0 9px; font-size: 13px; }
.post { display: flex; width: 78px; height: 24px; margin: -16px 1px 0 auto; border-radius: 3px; color: #fff; background: #a9a9a9; border-bottom: 2px solid #666; box-shadow: 0 1px 2px #999; }
.right p { margin: 6px 0 11px; line-height: 16px; }
.share { display: flex; gap: 4px; padding: 10px 0 0 2px; }
.share a { height: 32px; }
.like { position: absolute; right: 8px; top: 38px; width: 66px; height: 22px; border-radius: 2px; background: #fafafa; color: #222; overflow: hidden; }
.like span { flex: 1; }
.scrollbar { display: flex; flex-direction: column; width: 18px; padding: 0 1px; background: #f4f3ee; }
.scrollbar button { height: 17px; border: 1px solid #a9bdea; border-radius: 2px; background: #c9d7fc; }
.above { flex: 405; } .below { flex: 83; }
.thumb { flex: 316; border: 1px solid #95aee2; border-radius: 2px; background: linear-gradient(#8ba4dc, #8ba4dc) center / 7px 1px no-repeat, linear-gradient(90deg, #cddafd, #b9cbf8); }

.status { display: flex; align-items: center; height: 24px; padding: 0 2px 0 4px; border-bottom: 1px solid #222c44; white-space: nowrap; }
.status button { gap: 4px; }
.status .drop { margin: 0 0 0 5px; }
.s1 { margin-right: 26px; } .s2 { margin-right: 20px; } .s3 { margin-right: 17px; } .spk { margin: 0 14px 0 17px; } .s4 { margin-right: 13px; }
.status input { appearance: none; width: 88px; height: 12px; margin: 0 6px; background: linear-gradient(#4fb3d4, #4fb3d4) center / 100% 2px no-repeat; }
.status input::-webkit-slider-thumb { appearance: none; width: 12px; height: 12px; border: 1px solid #8f9ba6; border-radius: 6px; background: #fff; }
.status > svg:last-child { margin-left: 6px; }

.taskbar { position: relative; display: flex; align-items: center; height: 34px; overflow: hidden; background: linear-gradient(#3f80e8, #2a62dc 6px, #245bdb 70%, #1f4fc4); color: #fff; }
.start { gap: 5px; width: 97px; height: 30px; padding-right: 6px; border-radius: 0 8px 8px 0; background: linear-gradient(#5fae5c, #3a953a 25%, #36903a 80%, #23702a); font-size: 18px; font-style: italic; }
.grip { width: 5px; height: 20px; margin-left: 8px; background: radial-gradient(circle, #143c9c 1px, transparent 1px) 0 0 / 4px 4px; }
.far { margin: 0 0 0 79px; }
.task { justify-content: flex-start; gap: 4px; width: 160px; height: 25px; margin-left: 6px; padding-left: 11px; border: 1px solid #173f9c; border-radius: 3px; background: #1e4fb8; }
.tray { display: flex; align-items: center; width: 112px; height: 30px; align-self: flex-end; border-left: 1px solid #0c3f9e; background: #1593ea; }
.mark { position: absolute; right: 4px; top: 4px; font: bold 23px/28px "Liberation Sans Narrow", "Roboto Condensed", "DejaVu Sans Condensed", sans-serif; color: #d5d5dc; }
```
